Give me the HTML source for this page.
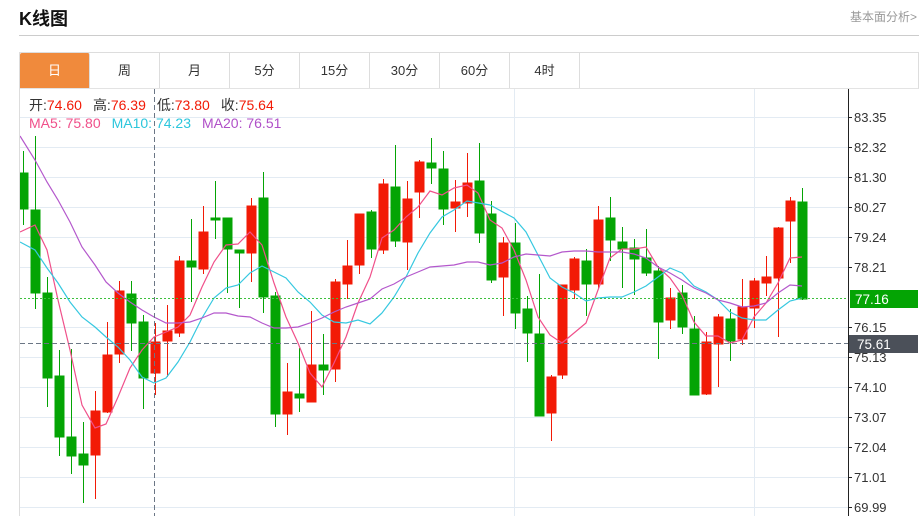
<!DOCTYPE html>
<html><head><meta charset="utf-8"><style>
*{margin:0;padding:0;box-sizing:border-box}
body{width:919px;height:516px;overflow:hidden;background:#fff;font-family:"Liberation Sans","Noto Sans CJK SC",sans-serif;position:relative}
.title{position:absolute;left:19px;top:5px;font-size:18px;font-weight:bold;color:#111}
.more{position:absolute;right:2px;top:8px;font-size:12px;color:#999}
.hr{position:absolute;left:19px;right:0;top:35px;height:1px;background:#ccc}
.tabs{position:absolute;left:19px;top:52px;width:900px;height:37px;border:1px solid #ddd;border-bottom:1px solid #e3e3e3;display:flex}
.tab{width:70px;height:35px;border-right:1px solid #ddd;text-align:center;line-height:35px;font-size:13px;color:#333}
.tab.on{background:#f08a3c;color:#fff;border-radius:2px 2px 0 0}
svg{position:absolute;left:0;top:0}
</style></head><body>
<div class="title">K线图</div>
<div class="more">基本面分析&gt;</div>
<div class="hr"></div>
<div class="tabs"><div class="tab on">日</div><div class="tab">周</div><div class="tab">月</div><div class="tab">5分</div><div class="tab">15分</div><div class="tab">30分</div><div class="tab">60分</div><div class="tab">4时</div></div>
<svg width="919" height="516" viewBox="0 0 919 516">
<defs><clipPath id="c"><rect x="20" y="89" width="828" height="427"/></clipPath></defs>
<line x1="19.5" y1="88" x2="19.5" y2="516" stroke="#ddd"/>
<g stroke="#e3ebf3" stroke-width="1">
<line x1="20" x2="848" y1="117.5" y2="117.5"/><line x1="20" x2="848" y1="147.5" y2="147.5"/><line x1="20" x2="848" y1="177.5" y2="177.5"/><line x1="20" x2="848" y1="207.5" y2="207.5"/><line x1="20" x2="848" y1="237.5" y2="237.5"/><line x1="20" x2="848" y1="267.5" y2="267.5"/><line x1="20" x2="848" y1="327.5" y2="327.5"/><line x1="20" x2="848" y1="357.5" y2="357.5"/><line x1="20" x2="848" y1="387.5" y2="387.5"/><line x1="20" x2="848" y1="417.5" y2="417.5"/><line x1="20" x2="848" y1="447.5" y2="447.5"/><line x1="20" x2="848" y1="477.5" y2="477.5"/><line x1="20" x2="848" y1="507.5" y2="507.5"/>
<line x1="514.5" x2="514.5" y1="89" y2="516"/><line x1="754.5" x2="754.5" y1="89" y2="516"/>
</g>
<g clip-path="url(#c)">
<g fill="#04a404" stroke="#04a404">
<line x1="23.5" x2="23.5" y1="151" y2="225"/><rect x="19" y="173" width="9" height="36"/>
<line x1="35.5" x2="35.5" y1="136" y2="309"/><rect x="31" y="210" width="9" height="83"/>
<line x1="47.5" x2="47.5" y1="277" y2="407"/><rect x="43" y="293" width="9" height="85"/>
<line x1="59.5" x2="59.5" y1="350" y2="456"/><rect x="55" y="376" width="9" height="61"/>
<line x1="71.5" x2="71.5" y1="349" y2="474"/><rect x="67" y="437" width="9" height="19"/>
<line x1="83.5" x2="83.5" y1="422" y2="503"/><rect x="79" y="454" width="9" height="11"/>
<line x1="131.5" x2="131.5" y1="281" y2="351"/><rect x="127" y="294" width="9" height="29"/>
<line x1="143.5" x2="143.5" y1="315" y2="409"/><rect x="139" y="322" width="9" height="56"/>
<line x1="191.5" x2="191.5" y1="219" y2="302"/><rect x="187" y="261" width="9" height="6"/>
<line x1="215.5" x2="215.5" y1="181" y2="239"/><rect x="211" y="218" width="9" height="2"/>
<line x1="227.5" x2="227.5" y1="218" y2="293"/><rect x="223" y="218" width="9" height="31"/>
<line x1="239.5" x2="239.5" y1="250" y2="308"/><rect x="235" y="250" width="9" height="3"/>
<line x1="263.5" x2="263.5" y1="172" y2="313"/><rect x="259" y="198" width="9" height="99"/>
<line x1="275.5" x2="275.5" y1="292" y2="427"/><rect x="271" y="296" width="9" height="118"/>
<line x1="299.5" x2="299.5" y1="348" y2="412"/><rect x="295" y="394" width="9" height="4"/>
<line x1="323.5" x2="323.5" y1="334" y2="395"/><rect x="319" y="365" width="9" height="5"/>
<line x1="371.5" x2="371.5" y1="210" y2="258"/><rect x="367" y="212" width="9" height="37"/>
<line x1="395.5" x2="395.5" y1="145" y2="247"/><rect x="391" y="187" width="9" height="54"/>
<line x1="431.5" x2="431.5" y1="138" y2="184"/><rect x="427" y="163" width="9" height="5"/>
<line x1="443.5" x2="443.5" y1="151" y2="225"/><rect x="439" y="169" width="9" height="40"/>
<line x1="479.5" x2="479.5" y1="143" y2="243"/><rect x="475" y="181" width="9" height="52"/>
<line x1="491.5" x2="491.5" y1="201" y2="283"/><rect x="487" y="214" width="9" height="66"/>
<line x1="515.5" x2="515.5" y1="223" y2="329"/><rect x="511" y="243" width="9" height="70"/>
<line x1="527.5" x2="527.5" y1="296" y2="362"/><rect x="523" y="309" width="9" height="24"/>
<line x1="539.5" x2="539.5" y1="274" y2="416"/><rect x="535" y="334" width="9" height="82"/>
<line x1="586.5" x2="586.5" y1="249" y2="316"/><rect x="582" y="261" width="9" height="23"/>
<line x1="610.5" x2="610.5" y1="197" y2="261"/><rect x="606" y="218" width="9" height="22"/>
<line x1="622.5" x2="622.5" y1="227" y2="288"/><rect x="618" y="242" width="9" height="7"/>
<line x1="634.5" x2="634.5" y1="239" y2="295"/><rect x="630" y="248" width="9" height="11"/>
<line x1="646.5" x2="646.5" y1="229" y2="276"/><rect x="642" y="258" width="9" height="15"/>
<line x1="658.5" x2="658.5" y1="266" y2="359"/><rect x="654" y="271" width="9" height="51"/>
<line x1="682.5" x2="682.5" y1="285" y2="334"/><rect x="678" y="293" width="9" height="34"/>
<line x1="694.5" x2="694.5" y1="316" y2="395"/><rect x="690" y="329" width="9" height="66"/>
<line x1="730.5" x2="730.5" y1="309" y2="361"/><rect x="726" y="319" width="9" height="22"/>
<line x1="802.5" x2="802.5" y1="188" y2="300"/><rect x="798" y="202" width="9" height="97"/>
</g>
<g fill="#f21a06" stroke="#f21a06">
<line x1="95.5" x2="95.5" y1="391" y2="499"/><rect x="91" y="411" width="9" height="44"/>
<line x1="107.5" x2="107.5" y1="322" y2="413"/><rect x="103" y="355" width="9" height="57"/>
<line x1="119.5" x2="119.5" y1="281" y2="363"/><rect x="115" y="291" width="9" height="63"/>
<line x1="155.5" x2="155.5" y1="323" y2="395"/><rect x="151" y="342" width="9" height="31"/>
<line x1="167.5" x2="167.5" y1="305" y2="377"/><rect x="163" y="331" width="9" height="10"/>
<line x1="179.5" x2="179.5" y1="256" y2="337"/><rect x="175" y="261" width="9" height="72"/>
<line x1="203.5" x2="203.5" y1="206" y2="274"/><rect x="199" y="232" width="9" height="37"/>
<line x1="251.5" x2="251.5" y1="198" y2="282"/><rect x="247" y="206" width="9" height="47"/>
<line x1="287.5" x2="287.5" y1="363" y2="435"/><rect x="283" y="392" width="9" height="22"/>
<line x1="311.5" x2="311.5" y1="311" y2="402"/><rect x="307" y="365" width="9" height="37"/>
<line x1="335.5" x2="335.5" y1="279" y2="382"/><rect x="331" y="282" width="9" height="87"/>
<line x1="347.5" x2="347.5" y1="240" y2="299"/><rect x="343" y="266" width="9" height="18"/>
<line x1="359.5" x2="359.5" y1="214" y2="274"/><rect x="355" y="214" width="9" height="51"/>
<line x1="383.5" x2="383.5" y1="179" y2="254"/><rect x="379" y="184" width="9" height="66"/>
<line x1="407.5" x2="407.5" y1="181" y2="270"/><rect x="403" y="199" width="9" height="43"/>
<line x1="419.5" x2="419.5" y1="160" y2="218"/><rect x="415" y="162" width="9" height="30"/>
<line x1="455.5" x2="455.5" y1="180" y2="232"/><rect x="451" y="202" width="9" height="6"/>
<line x1="467.5" x2="467.5" y1="153" y2="217"/><rect x="463" y="183" width="9" height="20"/>
<line x1="503.5" x2="503.5" y1="237" y2="316"/><rect x="499" y="243" width="9" height="34"/>
<line x1="551.5" x2="551.5" y1="375" y2="441"/><rect x="547" y="377" width="9" height="36"/>
<line x1="562.5" x2="562.5" y1="285" y2="379"/><rect x="558" y="285" width="9" height="90"/>
<line x1="574.5" x2="574.5" y1="257" y2="299"/><rect x="570" y="259" width="9" height="31"/>
<line x1="598.5" x2="598.5" y1="206" y2="288"/><rect x="594" y="220" width="9" height="64"/>
<line x1="670.5" x2="670.5" y1="288" y2="329"/><rect x="666" y="298" width="9" height="22"/>
<line x1="706.5" x2="706.5" y1="332" y2="395"/><rect x="702" y="342" width="9" height="52"/>
<line x1="718.5" x2="718.5" y1="314" y2="387"/><rect x="714" y="317" width="9" height="27"/>
<line x1="742.5" x2="742.5" y1="279" y2="345"/><rect x="738" y="307" width="9" height="32"/>
<line x1="754.5" x2="754.5" y1="278" y2="328"/><rect x="750" y="281" width="9" height="27"/>
<line x1="766.5" x2="766.5" y1="256" y2="296"/><rect x="762" y="277" width="9" height="6"/>
<line x1="778.5" x2="778.5" y1="227" y2="337"/><rect x="774" y="228" width="9" height="50"/>
<line x1="790.5" x2="790.5" y1="197" y2="263"/><rect x="786" y="201" width="9" height="20"/>
</g>
<g fill="none" stroke-width="1.2">
<polyline stroke="#f0508a" points="20,232 35,225 47,250 58,300 70,350 82,405 95,428 106,424 118,397 130,368 142,350 154,337 166,332 178,327 190,315 202,287 214,262 226,245 238,244 250,232 262,245 274,283 286,317 298,343 310,373 322,387 334,363 346,337 358,303 370,277 382,238 394,230 406,217 418,207 430,191 442,195 454,188 467,185 478,193 490,220 502,228 514,250 526,280 538,317 550,335 562,343 574,333 586,323 598,290 610,258 622,249 634,249 646,247 658,267 670,278 682,295 694,322 706,336 718,336 730,343 742,340 754,317 766,303 778,283 790,258 802,257"/>
<polyline stroke="#36c8e0" points="20,242 35,250 47,268 58,283 70,302 82,317 95,327 106,337 118,347 130,360 142,377 154,383 166,378 178,362 190,342 202,318 214,298 226,288 238,285 250,273 262,266 274,272 286,278 298,292 310,302 322,315 334,322 346,323 358,320 370,324 382,313 394,297 406,277 418,253 430,233 442,217 454,210 467,201 490,205 514,218 526,232 538,255 550,278 562,287 574,293 586,301 598,298 610,297 622,297 634,292 646,286 658,277 670,268 682,273 694,286 706,292 718,300 730,312 742,318 754,320 766,320 778,310 790,301 802,298"/>
<polyline stroke="#b458cc" points="20,136 35,160 47,182 58,200 70,222 82,247 95,265 106,282 118,293 130,302 142,310 154,317 166,323 178,323 190,322 202,318 214,313 226,313 238,316 250,317 262,323 274,328 286,328 298,327 310,323 322,318 334,312 346,307 358,303 370,299 382,289 394,284 406,277 418,272 430,267 442,266 454,265 467,262 478,262 490,265 502,263 514,257 526,254 538,255 550,256 562,252 574,251 586,251 598,252 610,252 622,252 634,254 646,258 658,267 670,273 682,280 694,288 706,293 718,300 730,303 742,307 754,306 766,303 778,293 790,285 802,286"/>
</g>
</g>
<line x1="154.5" x2="154.5" y1="89" y2="516" stroke="#6b7685" stroke-dasharray="5,3"/>
<line x1="20" x2="848" y1="343.5" y2="343.5" stroke="#6b7685" stroke-dasharray="5,3"/>
<line x1="20" x2="848" y1="298.5" y2="298.5" stroke="#3cc03c" stroke-dasharray="2,2"/>
<line x1="848.5" x2="848.5" y1="89" y2="516" stroke="#222"/>
<g stroke="#222"><line x1="848" x2="852" y1="117.5" y2="117.5"/><line x1="848" x2="852" y1="147.5" y2="147.5"/><line x1="848" x2="852" y1="177.5" y2="177.5"/><line x1="848" x2="852" y1="207.5" y2="207.5"/><line x1="848" x2="852" y1="237.5" y2="237.5"/><line x1="848" x2="852" y1="267.5" y2="267.5"/><line x1="848" x2="852" y1="327.5" y2="327.5"/><line x1="848" x2="852" y1="357.5" y2="357.5"/><line x1="848" x2="852" y1="387.5" y2="387.5"/><line x1="848" x2="852" y1="417.5" y2="417.5"/><line x1="848" x2="852" y1="447.5" y2="447.5"/><line x1="848" x2="852" y1="477.5" y2="477.5"/><line x1="848" x2="852" y1="507.5" y2="507.5"/></g>
<g font-family="Liberation Sans, sans-serif" font-size="13" fill="#333">
<text x="854" y="122">83.35</text><text x="854" y="152">82.32</text><text x="854" y="182">81.30</text><text x="854" y="212">80.27</text><text x="854" y="242">79.24</text><text x="854" y="272">78.21</text><text x="854" y="332">76.15</text><text x="854" y="362">75.13</text><text x="854" y="392">74.10</text><text x="854" y="422">73.07</text><text x="854" y="452">72.04</text><text x="854" y="482">71.01</text><text x="854" y="512">69.99</text>
</g>
<rect x="850" y="290" width="68" height="18" fill="#04a404"/>
<text x="855" y="304" font-family="Liberation Sans, sans-serif" font-size="13.5" fill="#fff">77.16</text>
<rect x="849" y="335" width="69" height="18" fill="#4b5059"/>
<text x="857" y="349" font-family="Liberation Sans, sans-serif" font-size="13.5" fill="#fff">75.61</text>
<g font-family="Liberation Sans, Noto Sans CJK SC, sans-serif" font-size="14">
<text x="29" y="110"><tspan fill="#333">开:</tspan><tspan fill="#f21a06">74.60</tspan><tspan fill="#333" dx="11">高:</tspan><tspan fill="#f21a06">76.39</tspan><tspan fill="#333" dx="11">低:</tspan><tspan fill="#f21a06">73.80</tspan><tspan fill="#333" dx="11">收:</tspan><tspan fill="#f21a06">75.64</tspan></text>
<text x="29" y="128"><tspan fill="#f0508a">MA5: 75.80</tspan><tspan fill="#2cc6dc" dx="11">MA10: 74.23</tspan><tspan fill="#b050c8" dx="11">MA20: 76.51</tspan></text>
</g>
</svg>
</body></html>
